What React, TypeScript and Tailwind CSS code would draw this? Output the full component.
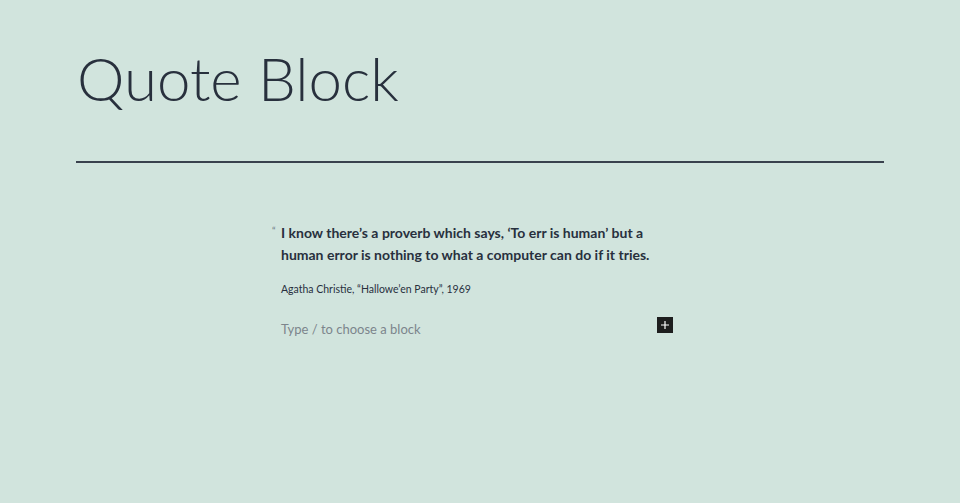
export default function App() {
  return (
    <div className="min-h-[503px] w-full bg-[#d1e4dd] text-[#28303d]" style={{ fontFamily: 'Lato, "Open Sans", sans-serif' }}>
      <div className="px-[76px] pt-[38px]">
        <h1 className="text-[60px] font-light leading-[80px] pl-[1px]">Quote Block</h1>
        <div className="mt-[43px] h-[2px] bg-[#39414d]" />
      </div>

      <div className="mx-auto mt-[59px] w-[398px]">
        <div className="relative">
          <span className="absolute -left-[9px] top-[1px] text-[10px] text-[#6f7985]">&ldquo;</span>
          <p className="text-[14px] font-bold leading-[22px]">
            I know there’s a proverb which says, ‘To err is human’ but a human error is nothing to what a computer can do if it tries.
          </p>
          <p className="mt-[15px] text-[10.5px] leading-[16px]">Agatha Christie, “Hallowe’en Party”, 1969</p>
        </div>

        <div className="mt-[20px] flex items-center justify-between pr-[6px]">
          <span className="text-[13px] leading-[20px] text-[#7c858c]">Type / to choose a block</span>
          <span className="mb-[7px] flex h-[16px] w-[16px] items-center justify-center bg-[#1e1e1e]">
            <svg width="10" height="10" viewBox="0 0 10 10"><path d="M5 1v8M1 5h8" stroke="#fff" strokeWidth="1.2" /></svg>
          </span>
        </div>
      </div>
    </div>
  );
}
